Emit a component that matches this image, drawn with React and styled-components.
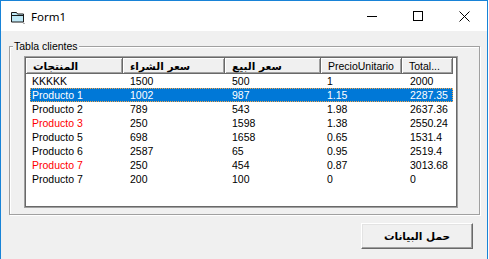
import React from "react";
import styled, { createGlobalStyle } from "styled-components";

const GlobalStyle = createGlobalStyle`
  html, body {
    margin: 0;
    padding: 0;
    background: #ffffff;
  }
  * {
    box-sizing: border-box;
  }
`;

const columns = [
  { title: "المنتجات", width: 97, pad: 2, arabic: true },
  { title: "سعر الشراء", width: 102, pad: 7, arabic: true },
  { title: "سعر البيع", width: 96, pad: 7, arabic: true },
  { title: "PrecioUnitario", width: 81, pad: 6 },
  { title: "Total...", width: 51, pad: 8 },
];

const rows = [
  { cells: ["KKKKK", "1500", "500", "1", "2000"] },
  { cells: ["Producto 1", "1002", "987", "1.15", "2287.35"], selected: true },
  { cells: ["Producto 2", "789", "543", "1.98", "2637.36"] },
  { cells: ["Producto 3", "250", "1598", "1.38", "2550.24"], red: true },
  { cells: ["Producto 5", "698", "1658", "0.65", "1531.4"] },
  { cells: ["Producto 6", "2587", "65", "0.95", "2519.4"] },
  { cells: ["Producto 7", "250", "454", "0.87", "3013.68"], red: true },
  { cells: ["Producto 7", "200", "100", "0", "0"] },
];

export default function App() {
  return (
    <>
      <GlobalStyle />
      <Window>
        <TitleBar>
          <AppIcon />
          <Title>Form1</Title>
          <Controls>
            <ControlButton>
              <svg width="10" height="10" viewBox="0 0 10 10">
                <path d="M0 5.5h10" stroke="#000" strokeWidth="1" />
              </svg>
            </ControlButton>
            <ControlButton>
              <svg width="10" height="10" viewBox="0 0 10 10">
                <rect x="0.5" y="0.5" width="9" height="9" fill="none" stroke="#000" />
              </svg>
            </ControlButton>
            <ControlButton>
              <svg width="11" height="11" viewBox="0 0 11 11">
                <path d="M0.5 0.5l10 10M10.5 0.5l-10 10" stroke="#000" strokeWidth="1" />
              </svg>
            </ControlButton>
          </Controls>
        </TitleBar>

        <Client>
          <GroupBox>
            <Legend>Tabla clientes</Legend>
            <ListFrame>
              <ListInner>
                <Header>
                  {columns.map((c) => (
                    <HeaderCell key={c.title} $width={c.width}>
                      <HeaderText $arabic={c.arabic}>{c.title}</HeaderText>
                    </HeaderCell>
                  ))}
                </Header>
                {rows.map((r, i) => (
                  <Row key={i} $selected={r.selected}>
                    {r.cells.map((v, j) => (
                      <Cell
                        key={j}
                        $width={j === 0 ? columns[j].width - 4 : columns[j].width}
                        $pad={j === 0 ? 2 : columns[j].pad}
                        $red={j === 0 && r.red && !r.selected}
                      >
                        {v}
                      </Cell>
                    ))}
                  </Row>
                ))}
              </ListInner>
            </ListFrame>
          </GroupBox>

          <ButtonRow>
            <Button>حمل البيانات</Button>
          </ButtonRow>
        </Client>
      </Window>
    </>
  );
}

function AppIcon() {
  return (
    <IconWrap>
      <svg width="16" height="16" viewBox="0 0 16 16">
        <path d="M1.5 3.5h5l1 1.5h6v8h-12z" fill="#bfe9f7" stroke="#1a1a1a" />
        <path d="M1.5 6.5h12" stroke="#1a1a1a" />
        <path d="M13 13.5l1.5 1.5" stroke="#6a6a6a" />
      </svg>
    </IconWrap>
  );
}

const Window = styled.div`
  width: 488px;
  height: 259px;
  border: 1px solid #1883d7;
  border-bottom: none;
  display: flex;
  flex-direction: column;
  font-family: "Liberation Sans", Arial, sans-serif;
  color: #000;
  overflow: hidden;
`;

const TitleBar = styled.div`
  height: 30px;
  background: #ffffff;
  display: flex;
  align-items: center;
  flex-shrink: 0;
`;

const IconWrap = styled.div`
  width: 16px;
  height: 16px;
  margin-left: 9px;
  margin-top: 1px;
  display: flex;
`;

const Title = styled.span`
  margin-left: 5px;
  font-family: "Noto Sans", "Liberation Sans", sans-serif;
  font-size: 11.5px;
  color: #000;
`;

const Controls = styled.div`
  margin-left: auto;
  display: flex;
  height: 100%;
`;

const ControlButton = styled.div`
  width: 46px;
  height: 100%;
  display: flex;
  align-items: center;
  justify-content: center;
`;

const Client = styled.div`
  flex: 1;
  background: #f0f0f0;
  padding: 15px 7px 0 8px;
  display: flex;
  flex-direction: column;
`;

const GroupBox = styled.div`
  position: relative;
  height: 169px;
  border: 1px solid #a0a0a0;
  box-shadow: inset 1px 1px 0 #ffffff, 1px 1px 0 #ffffff;
  padding: 9px 0 0 14px;
`;

const Legend = styled.span`
  position: absolute;
  top: -7px;
  left: 3px;
  padding: 0 1px;
  background: #f0f0f0;
  font-size: 10.5px;
  line-height: 13px;
`;

const ListFrame = styled.div`
  width: 434px;
  height: 152px;
  border: 1px solid;
  border-color: #a0a0a0 #a0a0a0 #a0a0a0 #a0a0a0;
`;

const ListInner = styled.div`
  height: 100%;
  border: 1px solid;
  border-color: #696969 #696969 #696969 #696969;
  background: #ffffff;
`;

const Header = styled.div`
  display: flex;
  height: 16px;
`;

const HeaderCell = styled.div`
  width: ${(p) => p.$width}px;
  height: 16px;
  background: #f0f0f0;
  border-right: 1px solid #696969;
  border-bottom: 1px solid #696969;
  box-shadow: inset 1px 1px 0 #ffffff, inset -1px -1px 0 #a0a0a0;
  padding-left: 7px;
  display: flex;
  align-items: center;
  overflow: hidden;
  white-space: nowrap;
`;

const HeaderText = styled.span`
  font-family: ${(p) =>
    p.$arabic ? '"DejaVu Sans", sans-serif' : '"Liberation Sans", Arial, sans-serif'};
  font-size: ${(p) => (p.$arabic ? "10.5px" : "10.5px")};
  font-weight: ${(p) => (p.$arabic ? "bold" : "normal")};
  line-height: 14px;
`;

const Row = styled.div`
  display: flex;
  height: 14px;
  margin-left: 4px;
  width: 423px;
  background: ${(p) => (p.$selected ? "#0078d7" : "transparent")};
  color: ${(p) => (p.$selected ? "#ffffff" : "#000000")};
  outline: ${(p) => (p.$selected ? "1px dotted #f7a64a" : "none")};
  outline-offset: -1px;
`;

const Cell = styled.div`
  width: ${(p) => p.$width}px;
  padding-left: ${(p) => p.$pad}px;
  font-size: 10.5px;
  line-height: 14px;
  white-space: nowrap;
  overflow: hidden;
  color: ${(p) => (p.$red ? "#ff0000" : "inherit")};
`;

const ButtonRow = styled.div`
  display: flex;
  justify-content: flex-end;
  margin-top: 8px;
  padding-right: 7px;
`;

const Button = styled.div`
  width: 112px;
  height: 26px;
  background: #f0f0f0;
  border: 1px solid;
  border-color: #ffffff #696969 #696969 #ffffff;
  box-shadow: inset -1px -1px 0 #a0a0a0, inset 1px 1px 0 #e3e3e3;
  display: flex;
  align-items: center;
  justify-content: center;
  font-family: "DejaVu Sans", sans-serif;
  font-weight: bold;
  font-size: 10.5px;
`;
